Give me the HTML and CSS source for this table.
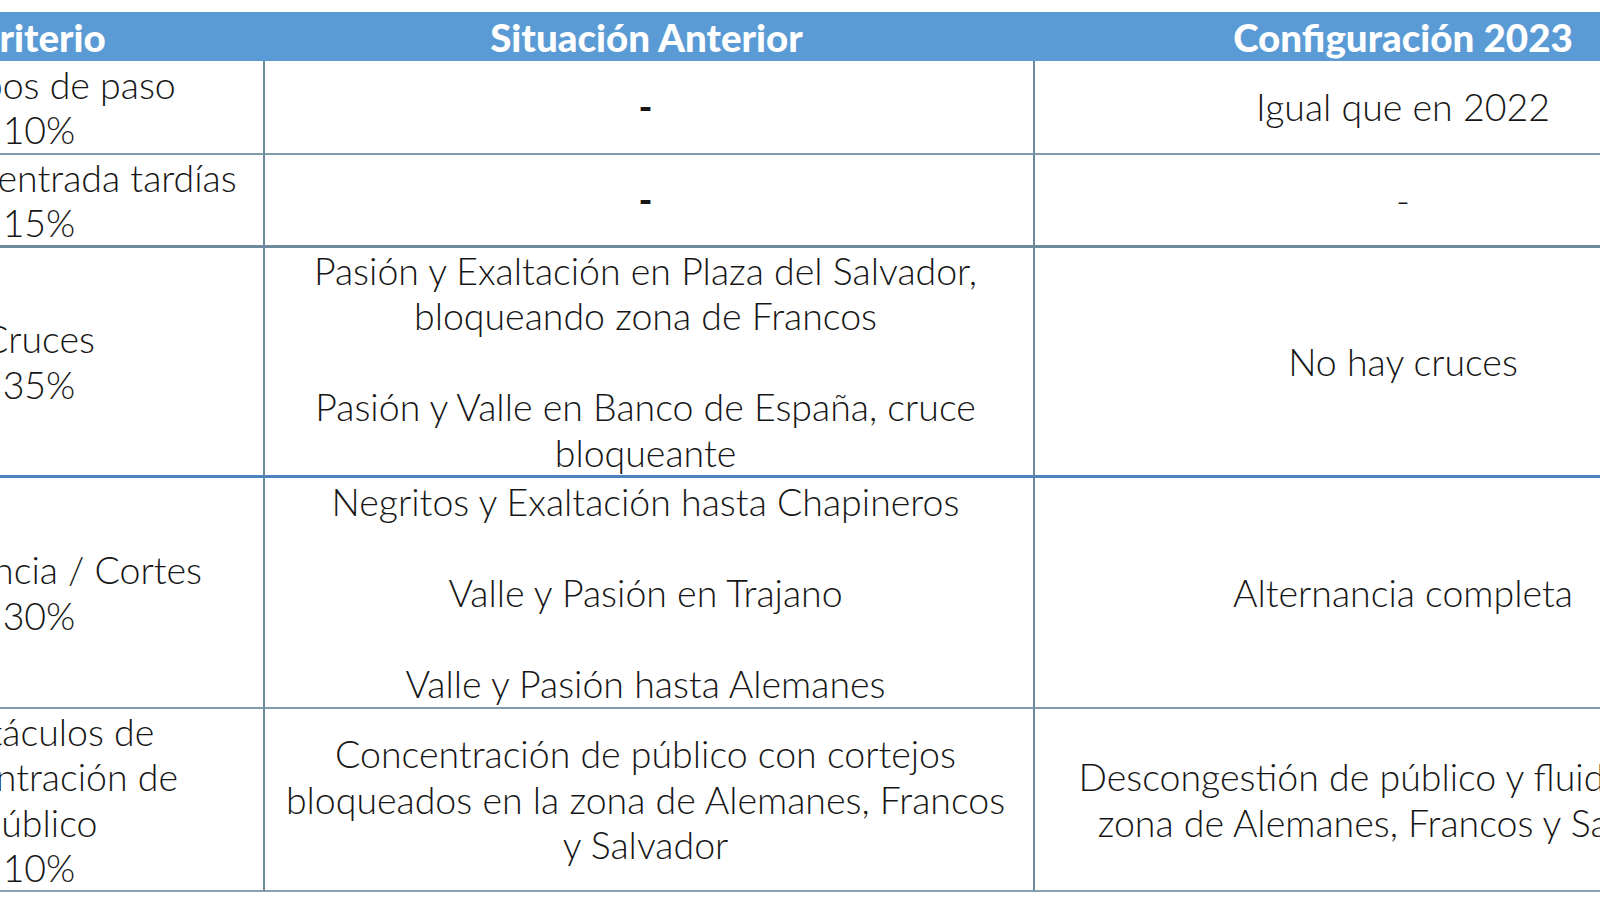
FILE: index.html
```html
<!DOCTYPE html>
<html lang="es">
<head>
<meta charset="utf-8">
<title>Criterios</title>
<link rel="stylesheet" href="styles.css">
</head>
<body>
<div class="page">
<div class="grid">
  <div class="cell head">Criterio</div>
  <div class="cell head c2h">Situación Anterior</div>
  <div class="cell head">Configuración 2023</div>

  <div class="cell r1 c1"><p>Tiempos de paso</p><p>10%</p></div>
  <div class="cell r1 c2"><p class="dash">-</p></div>
  <div class="cell r1 c3"><p>Igual que en 2022</p></div>

  <div class="cell r2 c1"><p>Horas de entrada tardías</p><p>15%</p></div>
  <div class="cell r2 c2"><p class="dash">-</p></div>
  <div class="cell r2 c3"><p>-</p></div>

  <div class="cell r3 c1"><p>Cruces</p><p>35%</p></div>
  <div class="cell r3 c2"><p>Pasión y Exaltación en Plaza del Salvador,<br>bloqueando zona de Francos</p><p class="gap">Pasión y Valle en Banco de España, cruce<br>bloqueante</p></div>
  <div class="cell r3 c3"><p>No hay cruces</p></div>

  <div class="cell r4 c1"><p>Alternancia / Cortes</p><p>30%</p></div>
  <div class="cell r4 c2"><p>Negritos y Exaltación hasta Chapineros</p><p class="gap">Valle y Pasión en Trajano</p><p class="gap">Valle y Pasión hasta Alemanes</p></div>
  <div class="cell r4 c3"><p>Alternancia completa</p></div>

  <div class="cell r5 c1"><p>Obstáculos de<br>concentración de<br>público</p><p>10%</p></div>
  <div class="cell r5 c2"><p>Concentración de público con cortejos<br>bloqueados en la zona de Alemanes, Francos<br>y Salvador</p></div>
  <div class="cell r5 c3"><p>Descongestión de público y fluidez en la<br>zona de Alemanes, Francos y Salvador</p></div>
</div>
</div>
</body>
</html>
```
FILE: styles.css
```css
html, body {
  margin: 0;
  padding: 0;
  background: #ffffff;
  overflow: hidden;
}
.page {
  width: 1600px;
  height: 900px;
  overflow: hidden;
  padding-top: 12px;
  box-sizing: border-box;
}
.grid {
  display: grid;
  grid-template-columns: 450px 770px 736px;
  grid-template-rows: 49px 94px 93px 230px 231px 183px;
  margin-left: -185px;
  width: 1956px;
  font-family: Lato, "Noto Sans", sans-serif;
  color: #161616;
}
.cell {
  box-sizing: border-box;
  display: flex;
  flex-direction: column;
  justify-content: center;
  align-items: center;
  text-align: center;
  font-size: 37.5px;
  font-weight: 300;
  line-height: 45.4px;
  border-bottom: 2px solid #7f9aab;
}
.cell p { margin: 0; }
.cell p.gap { margin-top: 45.4px; }
.cell p.dash { font-weight: 700; }
.c1, .c2 { border-right: 2px solid #6b8a9e; }
.c2, .c2h { padding-right: 7px; }
.head {
  background: #5b9bd5;
  color: #ffffff;
  font-weight: 900;
  font-size: 38.5px;
  line-height: 49px;
  border-bottom: none;
  padding-top: 1px;
}
.r2 { border-bottom: 3px solid #6d8a9c; }
.r3 { border-bottom: 3px solid #4c82c2; }
.r5 { border-bottom: 2px solid #8aa2b0; }
```
